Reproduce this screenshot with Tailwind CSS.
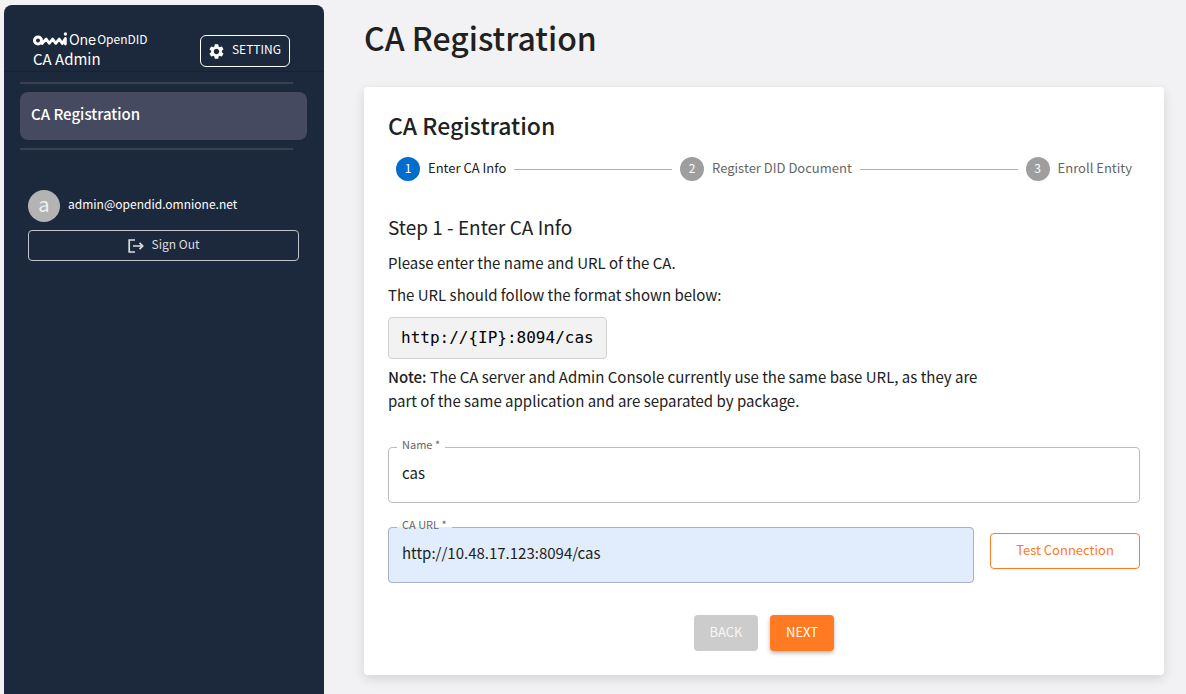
<!DOCTYPE html>
<html lang="en">
<head>
<meta charset="utf-8">
<meta name="viewport" content="width=device-width, initial-scale=1">
<title>CA Registration</title>
<script src="https://cdn.jsdelivr.net/npm/@tailwindcss/browser@4"></script>
</head>
<body class="flex min-h-screen bg-[#f2f2f4] pl-1 font-['Noto_Sans_CJK_KR','Noto_Sans',sans-serif] text-base text-[#212121]">
<aside class="mt-[5px] w-80 shrink-0 rounded-t-lg bg-[#1c283b] text-white">
  <header class="flex h-[67px] items-end justify-between border-b border-[#172232] pr-[34px] pl-[29px]">
    <div>
      <div class="flex h-4 items-center">
        <svg class="h-4 w-9" viewBox="0 0 36 16" fill="none" stroke="currentColor" stroke-linecap="round" stroke-linejoin="round" role="img" aria-label="omni">
          <circle cx="5" cy="9.500" r="3.500" stroke-width="3"/>
          <path stroke-width="2.800" d="M9 12.500L13.200 8L16.200 12.300L19.600 8L22.800 12.300L26.200 8L29.300 12.500L32.400 7.500V13"/>
          <circle cx="32.400" cy="3" r="0.900" stroke-width="1.500" fill="currentColor"/>
        </svg>
        <span class="pt-0.5 font-['Inter',sans-serif] text-sm/4">One</span>
        <span class="ml-px text-xs/4">OpenDID</span>
      </div>
      <p class="text-[15px]/6">CA Admin</p>
    </div>
    <button class="mb-1 flex h-8 w-[90px] items-center justify-between rounded-md border border-white px-2 text-xs/4 text-white">
      <svg class="size-[15px]" viewBox="2 2 20 20" fill="currentColor" aria-hidden="true"><path d="M19.14 12.94c.04-.3.06-.61.06-.94 0-.32-.02-.64-.07-.94l2.03-1.58c.18-.14.23-.41.12-.61l-1.92-3.32c-.12-.22-.37-.29-.59-.22l-2.39.96c-.5-.38-1.03-.7-1.62-.94l-.36-2.54c-.04-.24-.24-.41-.48-.41h-3.84c-.24 0-.43.17-.47.41l-.36 2.54c-.59.24-1.13.57-1.62.94l-2.39-.96c-.22-.08-.47 0-.59.22L2.74 8.87c-.12.21-.08.47.12.61l2.03 1.58c-.05.3-.09.63-.09.94s.02.64.07.94l-2.03 1.58c-.18.14-.23.41-.12.61l1.92 3.32c.12.22.37.29.59.22l2.39-.96c.5.38 1.03.7 1.62.94l.36 2.54c.05.24.24.41.48.41h3.84c.24 0 .44-.17.47-.41l.36-2.54c.59-.24 1.13-.56 1.62-.94l2.39.96c.22.08.47 0 .59-.22l1.92-3.32c.12-.22.07-.47-.12-.61l-2.01-1.580zM12 15.6c-1.98 0-3.6-1.62-3.6-3.6s1.62-3.6 3.6-3.6 3.6 1.62 3.6 3.6-1.62 3.6-3.6 3.6z"/></svg>
      <span class="pb-1">SETTING</span>
    </button>
  </header>
  <nav class="pt-[10px] pr-[17px] pl-4" aria-label="Main">
    <hr class="mr-[14px] mb-2 border-t-2 border-[#3a4152]">
    <a href="#" class="flex h-12 items-center rounded-lg bg-[#454a60] px-[11px] pb-1 text-[15px]/6 font-medium">CA Registration</a>
    <hr class="mt-2 mr-[14px] border-t-2 border-[#3a4152]">
  </nav>
  <section class="mt-10 pr-[25px] pl-6" aria-label="Account">
    <div class="flex items-center gap-2">
      <span class="flex size-8 items-center justify-center rounded-full bg-[#b3b3b3] pb-1 text-xl/7 text-[#f0f0f0]">a</span>
      <span class="pb-1 text-xs/5">admin@opendid.omnione.net</span>
    </div>
    <button class="mt-2 flex h-[31px] w-full items-center justify-center gap-2 rounded border border-[#c0c4ca] text-xs/4 text-[#dcdee2]">
      <svg class="h-4 w-4" viewBox="0 0 16 16" fill="none" stroke="currentColor" stroke-width="1.700" aria-hidden="true"><path d="M7 2H1.200V14H7M5 8H14.500M11.500 4.800L14.700 8L11.500 11.200"/></svg>
      <span class="pb-1">Sign Out</span>
    </button>
  </section>
</aside>
<main class="min-w-0 flex-1 pt-[13px] pr-[22px] pb-[19px] pl-10">
  <h1 class="text-[32px]/[48px] font-medium">CA Registration</h1>
  <section class="mt-[26px] rounded bg-white px-6 pt-[22px] pb-6 shadow-[0_4px_12px_rgba(0,0,0,0.13)]">
    <h2 class="text-[23px]/8 font-medium">CA Registration</h2>
    <ol class="mt-4 flex items-center gap-2 px-2 text-[13px]/5">
      <li class="flex items-center gap-2" aria-current="step"><span class="flex size-6 items-center justify-center rounded-full bg-[#006dcc] pb-0.5 text-xs/5 text-white">1</span><span class="pb-0.5">Enter CA Info</span></li>
      <li class="h-px flex-1 bg-[#b0b0b0]" role="presentation"></li>
      <li class="flex items-center gap-2 text-[#666]"><span class="flex size-6 items-center justify-center rounded-full bg-[#9e9e9e] pb-0.5 text-xs/5 text-white">2</span><span class="pb-0.5">Register DID Document</span></li>
      <li class="h-px flex-1 bg-[#b0b0b0]" role="presentation"></li>
      <li class="flex items-center gap-2 text-[#666]"><span class="flex size-6 items-center justify-center rounded-full bg-[#9e9e9e] pb-0.5 text-xs/5 text-white">3</span><span class="pb-0.5">Enroll Entity</span></li>
    </ol>
    <form class="mt-[30px]">
      <h3 class="text-[19px]/8">Step 1 - Enter CA Info</h3>
      <p class="mt-2 text-[15px]/6">Please enter the name and URL of the CA.</p>
      <p class="mt-2 text-[15px]/6">The URL should follow the format shown below:</p>
      <code class="mt-[10px] flex h-[42px] w-fit items-center rounded border border-[#d0d0d0] bg-[#f2f2f2] px-3 font-['DejaVu_Sans_Mono',monospace] text-base/6 text-black">http://{IP}:8094/cas</code>
      <p class="mt-1.5 max-w-[600px] text-[15px]/6"><strong class="font-medium">Note:</strong> The CA server and Admin Console currently use the same base URL, as they are part of the same application and are separated by package.</p>
      <fieldset class="mt-[21px] rounded border border-[#bdbdbd]">
        <legend class="ml-2 px-[5px] pb-1.5 text-[11px]/5 text-[#666]"><label for="name">Name *</label></legend>
        <input id="name" type="text" value="cas" class="block h-[42px] w-full bg-transparent px-[13px] pb-[18px] text-[15px]/5 outline-none">
      </fieldset>
      <div class="mt-[11px] flex items-start gap-4">
        <fieldset class="min-w-0 flex-1 rounded border border-[#a7b3c2] bg-[#e1edfc]">
          <legend class="ml-2 px-[5px] pb-1.5 text-[11px]/5 text-[#666]"><label for="url">CA URL *</label></legend>
          <input id="url" type="text" value="http://10.48.17.123:8094/cas" class="block h-[42px] w-full bg-transparent px-[13px] pb-[18px] text-[15px]/5 outline-none">
        </fieldset>
        <button type="button" class="mt-[19px] h-9 w-[150px] rounded border border-[#ff7a22] pb-0.5 text-[13px]/5 text-[#ff7a22]">Test Connection</button>
      </div>
      <div class="mt-8 flex justify-center gap-3">
        <button type="button" disabled class="h-9 w-16 rounded bg-[#cccccc] pb-0.5 text-[13px]/5 text-[#f7f7f7]">BACK</button>
        <button type="submit" class="h-9 w-16 rounded bg-[#ff7a22] pb-0.5 text-[13px]/5 text-white shadow-[0_2px_4px_rgba(0,0,0,0.3)]">NEXT</button>
      </div>
    </form>
  </section>
</main>
</body>
</html>
